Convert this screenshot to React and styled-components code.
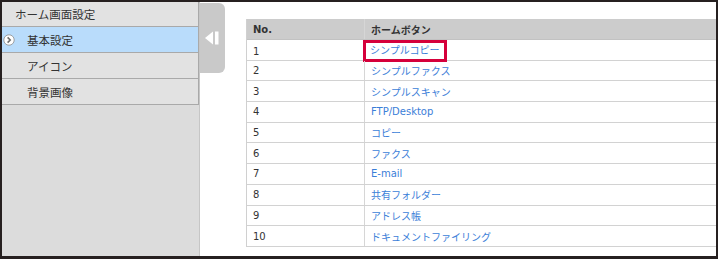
import styled, { createGlobalStyle } from 'styled-components'

const GlobalStyle = createGlobalStyle`
  body {
    margin: 0;
    background: #ffffff;
  }
`

const Frame = styled.div`
  display: flex;
  width: 718px;
  height: 259px;
  box-sizing: border-box;
  border: 2px solid #262020;
  border-bottom-width: 3px;
  overflow: hidden;
  background: #ffffff;
`

const Sidebar = styled.aside`
  width: 198px;
  flex-shrink: 0;
  box-sizing: border-box;
  background: #dcdcdc;
  border-right: 1px solid #c6c6c6;
  font-family: "Noto Sans CJK JP", sans-serif;
  font-size: 11.5px;
  color: #333333;
`

const Menu = styled.ul`
  list-style: none;
  margin: 0;
  padding: 0;
  border-right: 1px solid #a9a9a9;
`

const MenuItem = styled.li`
  display: flex;
  align-items: center;
  height: ${p => (p.$header ? '24px' : '25px')};
  border-bottom: 1px solid #a9a9a9;
  background: ${p => (p.$active ? '#b9dcfb' : '#e2e2e2')};
  padding-left: ${p => (p.$header ? '13px' : '25px')};
  position: relative;
`

const ActiveMark = styled.svg`
  position: absolute;
  left: 1px;
  top: 7px;
`

const Handle = styled.button`
  align-self: flex-start;
  flex-shrink: 0;
  display: flex;
  align-items: center;
  justify-content: center;
  gap: 2px;
  width: 25px;
  height: 70px;
  margin-top: 1px;
  padding: 0 0 0 0;
  border: none;
  border-radius: 0 6px 6px 0;
  background: #c9c9c9;
`

const Main = styled.main`
  flex: 1;
  min-width: 0;
  overflow: hidden;
  padding: 17px 0 0 21px;
`

const Table = styled.div`
  width: 500px;
  border-left: 1px solid #d0d0d0;
  font-family: "DejaVu Sans", "Noto Sans CJK JP", sans-serif;
  font-size: 10px;
  color: #333333;
`

const Row = styled.div`
  display: grid;
  grid-template-columns: 118px 1fr;
  align-items: center;
  box-sizing: border-box;
  height: ${p => (p.$head ? '21px' : '20.7px')};
  background: ${p => (p.$head ? '#cccccc' : '#ffffff')};
  border-bottom: 1px solid ${p => (p.$head ? '#c2c2c2' : '#d2d2d2')};
  font-weight: ${p => (p.$head ? 700 : 400)};
`

const Cell = styled.div`
  display: flex;
  align-items: center;
  height: 100%;
  padding-left: 6px;
  border-right: ${p => (p.$first ? '1px solid #d6d6d6' : 'none')};
`

const Link = styled.a`
  color: #3b7ed8;
  text-decoration: none;
  white-space: nowrap;
  ${p =>
    p.$highlight &&
    `
    display: inline-block;
    height: 22px;
    line-height: 16px;
    box-sizing: border-box;
    margin-left: -8px;
    padding: 0 4px;
    border: 3px solid #d5003b;
  `}
`

const buttons = [
  'シンプルコピー',
  'シンプルファクス',
  'シンプルスキャン',
  'FTP/Desktop',
  'コピー',
  'ファクス',
  'E-mail',
  '共有フォルダー',
  'アドレス帳',
  'ドキュメントファイリング',
]

const App = () => {
  return (
    <>
      <GlobalStyle />
      <Frame>
        <Sidebar>
          <Menu>
            <MenuItem $header>ホーム画面設定</MenuItem>
            <MenuItem $active>
              <ActiveMark width="12" height="12" viewBox="0 0 12 12">
                <circle cx="6" cy="6" r="5.2" fill="#ffffff" stroke="#8a8a8a" strokeWidth="0.8" />
                <path d="M4.6 3.4 L7.2 6 L4.6 8.6" fill="none" stroke="#6d6d6d" strokeWidth="1.6" />
              </ActiveMark>
              基本設定
            </MenuItem>
            <MenuItem>アイコン</MenuItem>
            <MenuItem>背景画像</MenuItem>
          </Menu>
        </Sidebar>
        <Handle aria-label="close">
          <svg width="15" height="14" viewBox="0 0 15 14">
            <path d="M0 7 L8 0.5 L8 13.5 Z" fill="#ffffff" />
            <rect x="10" y="0.5" width="3.5" height="13" fill="#ffffff" />
          </svg>
        </Handle>
        <Main>
          <Table>
            <Row $head>
              <Cell $first>No.</Cell>
              <Cell>ホームボタン</Cell>
            </Row>
            {buttons.map((name, i) => (
              <Row key={name}>
                <Cell $first>{i + 1}</Cell>
                <Cell>
                  <Link href="#" $highlight={i === 0}>{name}</Link>
                </Cell>
              </Row>
            ))}
          </Table>
        </Main>
      </Frame>
    </>
  )
}

export default App
